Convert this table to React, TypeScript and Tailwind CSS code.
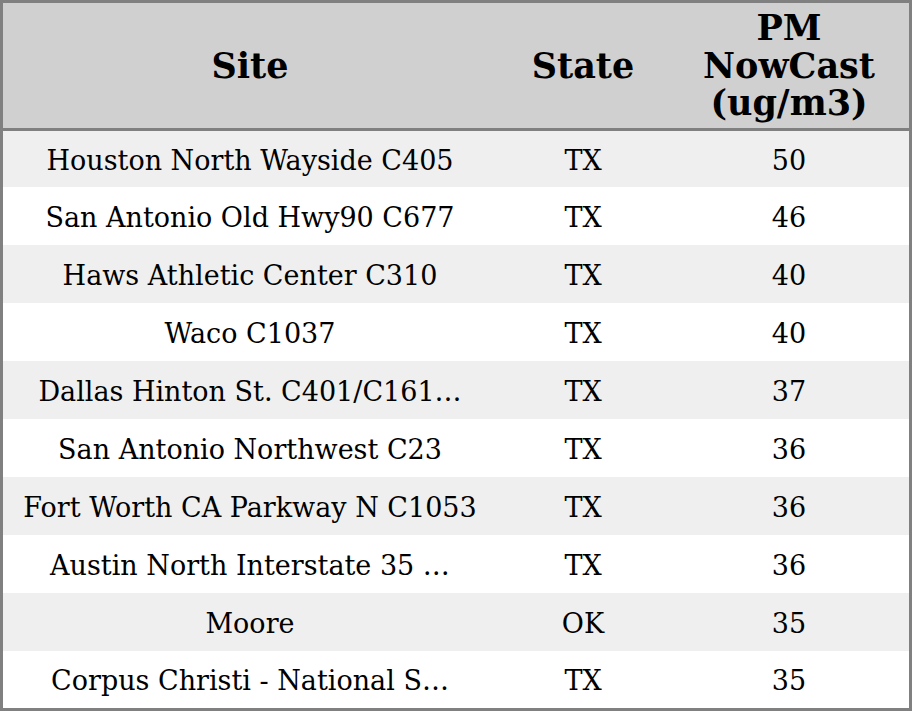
const rows: [string, string, string][] = [
  ['Houston North Wayside C405', 'TX', '50'],
  ['San Antonio Old Hwy90 C677', 'TX', '46'],
  ['Haws Athletic Center C310', 'TX', '40'],
  ['Waco C1037', 'TX', '40'],
  ['Dallas Hinton St. C401/C161…', 'TX', '37'],
  ['San Antonio Northwest C23', 'TX', '36'],
  ['Fort Worth CA Parkway N C1053', 'TX', '36'],
  ['Austin North Interstate 35 …', 'TX', '36'],
  ['Moore', 'OK', '35'],
  ['Corpus Christi - National S…', 'TX', '35'],
];

export default function App() {
  return (
    <div
      className="w-[912px] h-[711px] border-[3px] border-[#808080] bg-white text-black flex flex-col"
      style={{ fontFamily: '"DejaVu Serif", serif' }}
    >
      <div className="h-[128px] shrink-0 bg-[#d0d0d0] border-b-[3px] border-[#808080] flex items-center font-bold text-[35px] leading-[37.5px]">
        <div className="w-[494px] text-center">Site</div>
        <div className="w-[172px] text-center">State</div>
        <div className="flex-1 text-center">
          PM
          <br />
          NowCast
          <br />
          (ug/m3)
        </div>
      </div>
      {rows.map((r, i) => (
        <div
          key={i}
          className={`${i === rows.length - 1 ? 'flex-1 min-h-0' : i === 0 ? 'h-[56px] shrink-0' : 'h-[58px] shrink-0'} flex items-center pt-[4px] text-[27px] ${i % 2 === 0 ? 'bg-[#efefef]' : 'bg-white'}`}
        >
          <div className="w-[494px] text-center whitespace-nowrap">{r[0]}</div>
          <div className="w-[172px] text-center">{r[1]}</div>
          <div className="flex-1 text-center">{r[2]}</div>
        </div>
      ))}
    </div>
  );
}
